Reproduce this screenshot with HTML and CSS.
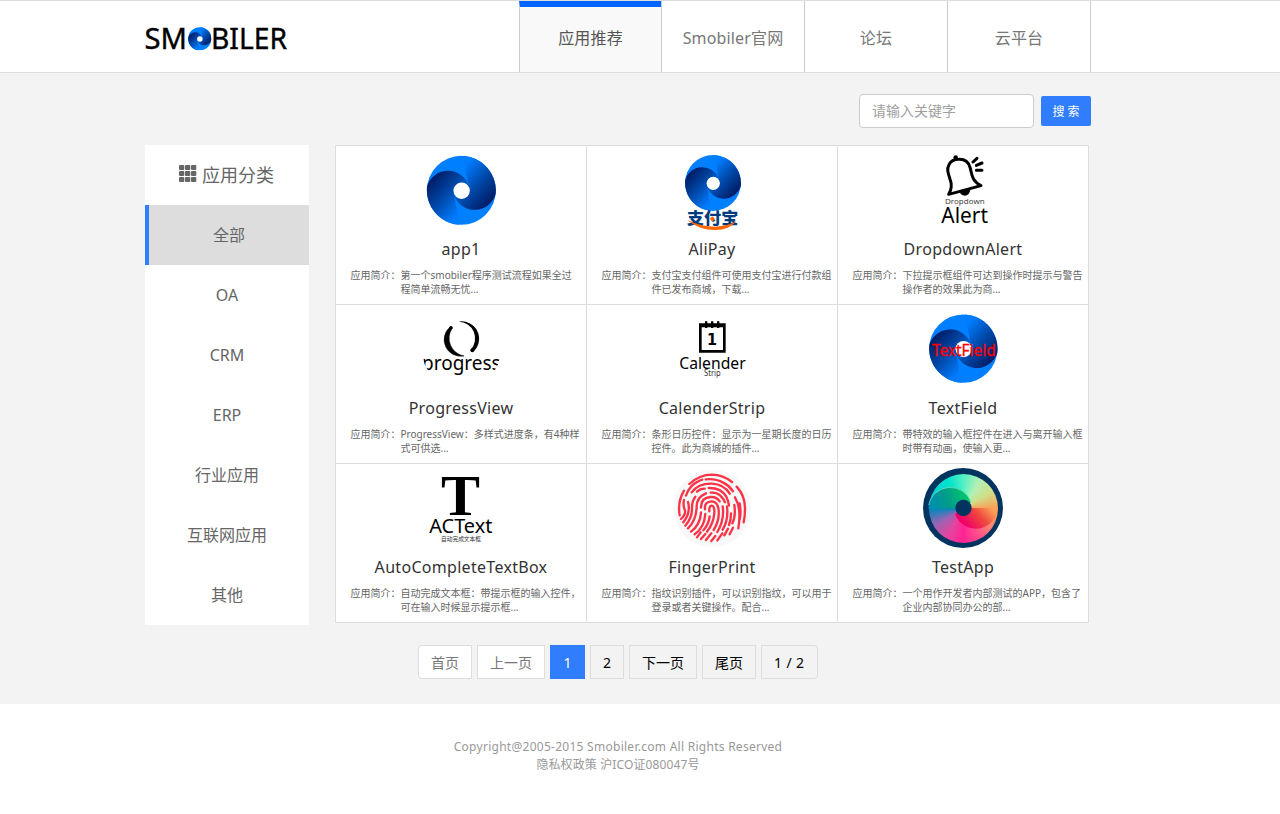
FILE: index.html
```html
<!DOCTYPE html>
<html lang="zh-CN">
<head>
<meta charset="utf-8">
<title>Smobiler</title>
<link rel="stylesheet" href="styles.css">
</head>
<body>
<svg class="defs" width="0" height="0">
  <defs>
    <linearGradient id="lobe" gradientUnits="userSpaceOnUse" x1="-33" y1="-9" x2="0" y2="20">
      <stop offset="0" stop-color="#001a62"/><stop offset=".5" stop-color="#0048a8"/><stop offset="1" stop-color="#007cff"/>
    </linearGradient>
    <symbol id="swirl" viewBox="-35 -35 70 70">
      <circle r="34.5" fill="#007fff"/>
      <path id="half" d="M-34.3-4A22 22 0 0 1 7-6L0 0-7 6-2 34.4A34.5 34.5 0 0 1-34.3-4Z" fill="url(#lobe)"/>
      <use href="#half" transform="rotate(180)"/>
      <circle r="8.2" cx=".3" cy=".4" fill="#fff"/>
    </symbol>
  </defs>
</svg>
<header class="header">
  <div class="container header-row">
    <svg class="logo" width="144" height="30" viewBox="0 0 144 30">
      <text x="-.5" y="25" textLength="42.500" lengthAdjust="spacingAndGlyphs">SM</text>
      <use href="#swirl" x="43" y="3" width="23.500" height="23.500"/>
      <text x="66" y="25" textLength="76" lengthAdjust="spacingAndGlyphs">BILER</text>
    </svg>
    <nav class="nav">
      <a class="nav-item active">应用推荐</a>
      <a class="nav-item">Smobiler官网</a>
      <a class="nav-item">论坛</a>
      <a class="nav-item">云平台</a>
    </nav>
  </div>
</header>
<main class="main">
  <div class="container">
    <form class="search">
      <input class="search-input" placeholder="请输入关键字">
      <button class="search-btn" type="button">搜 索</button>
    </form>
    <div class="content">
      <aside class="side">
        <div class="side-item side-title">
          <svg width="18" height="18" viewBox="0 0 18 18" fill="#666"><rect x="0" y="0" width="5.300" height="5" rx="1"/><rect x="6" y="0" width="5.300" height="5" rx="1"/><rect x="12" y="0" width="5.300" height="5" rx="1"/><rect x="0" y="6" width="5.300" height="5" rx="1"/><rect x="6" y="6" width="5.300" height="5" rx="1"/><rect x="12" y="6" width="5.300" height="5" rx="1"/><rect x="0" y="12" width="5.300" height="5" rx="1"/><rect x="6" y="12" width="5.300" height="5" rx="1"/><rect x="12" y="12" width="5.300" height="5" rx="1"/></svg>
          <span>应用分类</span>
        </div>
        <div class="side-item selected">全部</div>
        <div class="side-item">OA</div>
        <div class="side-item">CRM</div>
        <div class="side-item">ERP</div>
        <div class="side-item">行业应用</div>
        <div class="side-item">互联网应用</div>
        <div class="side-item">其他</div>
      </aside>
      <section class="grid">
        <article class="card">
          <svg class="pic" viewBox="273 30 240 240"><use href="#swirl" x="289" y="46" width="210" height="210"/></svg>
          <h3>app1</h3>
          <p><span>应用简介：</span><span>第一个smobiler程序测试流程如果全过<br>程简单流畅无忧...</span></p>
        </article>
        <article class="card">
          <svg class="pic" viewBox="261 30 240 240">
            <use href="#swirl" x="299" y="44" width="170" height="170"/>
            <text class="zh alipay" x="306" y="253" textLength="154" lengthAdjust="spacingAndGlyphs">支付宝</text>
            <path d="M306 240Q350 260 390 260 430 258 454 243 432 270 392 270 342 270 306 240Z" fill="#f60"/>
            <path d="M382 229l7 8-7 8-7-8Z" fill="#f60"/>
          </svg>
          <h3>AliPay</h3>
          <p><span>应用简介：</span><span>支付宝支付组件可使用支付宝进行付款组<br>件已发布商城，下载...</span></p>
        </article>
        <article class="card">
          <svg class="pic" viewBox="264 30 240 240">
            <g fill="none" stroke="#000" stroke-width="9" stroke-linecap="round" stroke-linejoin="round">
              <path d="M341 163Q354 142 346 120C340 102 334 88 342 74 348 62 360 58 371 58 390 57 401 68 405 82 411 100 408 122 438 137Z"/>
              <path d="M414 66l12-11M424 76l17-7M424 91h17"/>
            </g>
            <circle cx="362" cy="53" r="7"/><path d="M374 157l32-9q-2 19-17 19-10 0-15-10Z"/>
            <text x="330" y="192" font-size="22" fill="#444" textLength="119" lengthAdjust="spacingAndGlyphs">Dropdown</text>
            <text x="319" y="250" font-size="65" textLength="140" lengthAdjust="spacingAndGlyphs">Alert</text>
          </svg>
          <h3>DropdownAlert</h3>
          <p><span>应用简介：</span><span>下拉提示框组件可达到操作时提示与警告<br>操作者的效果此为商...</span></p>
        </article>
        <article class="card">
          <svg class="pic" viewBox="273 27 240 240">
            <defs><clipPath id="round"><circle cx="394" cy="147" r="119"/></clipPath></defs>
            <path d="M361 80A50 50 0 0 0 402 168A54 54 0 0 1 367 84Z" stroke="#000" stroke-width="1.500" stroke-linejoin="round"/>
            <path d="M386 65A52 52 0 0 1 431 154L422 149A50 50 0 0 0 386 65Z"/>
            <circle cx="363" cy="83" r="5"/><circle cx="427" cy="151" r="6"/>
            <text x="276" y="210" font-size="58" textLength="236" lengthAdjust="spacingAndGlyphs" clip-path="url(#round)">progress</text>
          </svg>
          <h3>ProgressView</h3>
          <p><span>应用简介：</span><span>ProgressView：多样式进度条，有4种样<br>式可供选...</span></p>
        </article>
        <article class="card">
          <svg class="pic" viewBox="261 27 240 240">
            <path d="M346 74h72v80h-72Z" fill="none" stroke="#000" stroke-width="8"/>
            <path d="M346 72h72v10h-72ZM360 64h7v20h-7ZM378 64h7v20h-7ZM396 64h7v20h-7Z"/>
            <text x="366" y="135" font-size="50" font-weight="700" textLength="30" lengthAdjust="spacingAndGlyphs" class="one">1</text>
            <text x="283" y="208" font-size="51" textLength="199" lengthAdjust="spacingAndGlyphs">Calender</text>
            <text x="357" y="228" font-size="24" fill="#333" textLength="50" lengthAdjust="spacingAndGlyphs">Strip</text>
          </svg>
          <h3>CalenderStrip</h3>
          <p><span>应用简介：</span><span>条形日历控件：显示为一星期长度的日历<br>控件。此为商城的插件...</span></p>
        </article>
        <article class="card">
          <svg class="pic" viewBox="264 27 240 240"><use href="#swirl" x="281" y="42" width="208" height="208"/>
            <text x="291" y="168" font-size="49" fill="#f00" stroke="#f00" textLength="191" lengthAdjust="spacingAndGlyphs">TextField</text></svg>
          <h3>TextField</h3>
          <p><span>应用简介：</span><span>带特效的输入框控件在进入与离开输入框<br>时带有动画，使输入更...</span></p>
        </article>
        <article class="card">
          <svg class="pic" viewBox="273 24 240 240">
            <text class="serif" x="333" y="164" font-size="172" textLength="117" lengthAdjust="spacingAndGlyphs">T</text>
            <text x="298" y="220" font-size="59" textLength="189" lengthAdjust="spacingAndGlyphs">ACText</text>
            <text class="zh" x="333" y="242" font-size="18" fill="#333" textLength="120" lengthAdjust="spacingAndGlyphs">自动完成文本框</text>
          </svg>
          <h3>AutoCompleteTextBox</h3>
          <p><span>应用简介：</span><span>自动完成文本框：带提示框的输入控件，<br>可在输入时候显示提示框...</span></p>
        </article>
        <article class="card">
          <svg class="pic" viewBox="261 24 240 240">
            <circle cx="382" cy="145" r="116" fill="#f8f8f8"/>
            <g fill="none" stroke="#fb3347" stroke-width="7" stroke-linecap="round">
              <path d="M313 72Q344 44 380 44 415 45 441 66M455 80Q481 108 480 148 480 169 476 187M297 92Q277 125 284 166"/>
              <path d="M303 107Q313 77 338 65 345 61 352 59M362 58Q392 55 415 68 433 77 444 94M450 112Q470 145 460 205M464 130Q469 160 464 178"/>
              <path d="M320 97Q340 70 380 71 418 73 434 101M297 120Q293 137 300 151 302 164 288 177"/>
              <path d="M336 95Q345 86 359 86M371 84Q408 83 424 110 430 122 432 137M309 126Q318 158 295 187M331 110Q320 124 321 145 322 172 301 197"/>
              <path d="M377 98Q396 96 408 109 417 118 420 127M363 100Q333 113 335 143 333 182 309 205"/>
              <path d="M348 143Q347 113 377 111 395 110 404 124M348 157Q346 194 318 215M448 135Q453 170 442 190"/>
              <path d="M360 148Q357 125 380 124 396 125 400 144 406 179 386 210M361 162Q358 203 329 223"/>
              <path d="M373 154Q372 137 380 137 389 138 388 158 386 190 366 215M374 169Q371 193 355 211"/>
              <path d="M413 139Q419 180 397 216M426 139Q431 180 413 209M438 160Q438 179 432 195M347 217L336 232M361 222L348 237M379 220L363 240M391 228L379 243M412 220L397 241M429 206L418 226M444 203L434 223"/>
            </g>
          </svg>
          <h3>FingerPrint</h3>
          <p><span>应用简介：</span><span>指纹识别插件，可以识别指纹，可以用于<br>登录或者关键操作。配合...</span></p>
        </article>
        <article class="card">
          <div class="pic wheel">
            <div class="wheel-disc"></div>
            <svg class="wheel-lobes" width="80" height="80" viewBox="-40 -40 80 80">
              <defs>
                <linearGradient id="green" gradientUnits="userSpaceOnUse" x1="-32" y1="4" x2="5" y2="-12"><stop stop-color="#008cb8"/><stop offset=".45" stop-color="#009a8c"/><stop offset="1" stop-color="#00c76c"/></linearGradient>
                <linearGradient id="red" gradientUnits="userSpaceOnUse" x1="26" y1="-2" x2="4" y2="18"><stop stop-color="#fb9f58"/><stop offset=".45" stop-color="#f0483e"/><stop offset="1" stop-color="#f00068"/></linearGradient>
              </defs>
              <path d="M-34.300-3A22 22 0 0 1 8-6L0 0-34.500 1Z" fill="url(#green)"/>
              <path d="M-34.300-3A22 22 0 0 1 8-6" fill="none" stroke="#7fe8c0" stroke-width=".7"/>
              <path d="M34.300 3A22 22 0 0 1-8 6L0 0 34.500 0Z" fill="url(#red)"/>
              <circle r="8.200" cx=".5" fill="#03335f"/>
            </svg>
          </div>
          <h3>TestApp</h3>
          <p><span>应用简介：</span><span>一个用作开发者内部测试的APP，包含了<br>企业内部协同办公的部...</span></p>
        </article>
      </section>
    </div>
    <div class="pager">
      <a class="page off first">首页</a><a class="page off">上一页</a><a class="page current">1</a><a class="page">2</a><a class="page">下一页</a><a class="page">尾页</a><a class="page last">1 / 2</a>
    </div>
  </div>
</main>
<footer class="footer">
  <div class="copy">Copyright@2005-2015 Smobiler.com All Rights Reserved</div>
  <div>隐私权政策 沪ICO证080047号</div>
</footer>
</body>
</html>
```
FILE: styles.css
```css
* { box-sizing: border-box; }
body { margin: 0; background: #fff; color: #666; font-family: "Noto Sans", "Noto Sans CJK SC", sans-serif; font-size: 14px; overflow: hidden; }
.defs { display: block; }
.container { width: 946px; margin-left: 145px; }
.header { height: 73px; border-top: 1px solid #ddd; border-bottom: 1px solid #ddd; background: #fff; }
.header-row { display: flex; justify-content: space-between; }
.logo { margin-top: 23px; overflow: visible; font-size: 29.5px; fill: #000; stroke: #000; stroke-width: .4px; }
.logo use { stroke: none; }
.nav { display: flex; width: 572px; border-right: 1px solid #ccc; }
.nav-item { width: 143px; height: 71px; border-left: 1px solid #ccc; font-size: 16px; line-height: 75px; letter-spacing: .15px; text-align: center; color: #777; }
.nav-item.active { width: 142px; border-top: 6px solid #06f; line-height: 63px; background: #f9f9f9; color: #555; }
.main { height: 631px; padding-top: 21px; background: #f3f3f3; }
.search { display: flex; justify-content: flex-end; align-items: center; gap: 7px; }
.search-input { width: 175px; height: 34px; padding: 0 12px 2px; border: 1px solid #ccc; border-radius: 4px; background: #fff; font: inherit; }
.search-input::placeholder { color: #a0a0a0; }
.search-btn { width: 50px; height: 30px; padding: 0; border: 0; border-radius: 2px; background: #307dfe; color: #fff; font: 12px "Noto Sans", "Noto Sans CJK SC", sans-serif; }
.content { display: flex; gap: 26px; margin-top: 17px; }
.side { width: 164px; height: 480px; background: #fff; }
.side-item { height: 60px; font-size: 16px; line-height: 60px; text-align: center; }
.side-title { display: flex; justify-content: center; align-items: center; gap: 5px; font-size: 18px; }
.side-title svg { margin: -2px 0 0 -1px; }
.side-item.selected { border-left: 4px solid #307dfe; background: #ddd; }
.grid { display: grid; grid-template-columns: repeat(3, 251px); grid-auto-rows: 159px; width: 754px; height: 478px; border-left: 1px solid #ddd; border-top: 1px solid #ddd; background: #fff; }
.card { padding-top: 4px; border-right: 1px solid #ddd; border-bottom: 1px solid #ddd; white-space: nowrap; }
.pic { display: block; width: 80px; height: 80px; margin: 0 auto; overflow: visible; }
.card h3 { margin: 7px 0 0; font-size: 16px; font-weight: 400; line-height: 24px; letter-spacing: .3px; text-align: center; color: #333; }
.card p { display: flex; margin: 7px 0 0 14.5px; font-size: 10px; line-height: 14px; }
.zh { font-family: "Noto Sans CJK SC", sans-serif; }
.alipay { font-size: 48px; font-weight: 900; fill: #003b7d; }
.one { font-family: "DejaVu Sans", sans-serif; }
.serif { font-family: "Liberation Serif", serif; font-weight: 700; }
.wheel { display: grid; place-items: center; border-radius: 50%; background: #03335f; }
.wheel > * { grid-area: 1 / 1; }
.wheel-disc { width: 69px; height: 69px; border-radius: 50%; background: conic-gradient(#54f0c4, #b4f0b4 30deg, #d0de88 60deg, #fba058 90deg, #ff8a70 120deg, #ff4f8c 150deg, #ff2494 180deg, #e544a0 210deg, #9a64b4 240deg, #0088bc 270deg, #00d2d4 295deg, #00e3cc 330deg, #54f0c4); }
.pager { display: flex; gap: 5px; margin: 20px 0 0 273px; font-size: 14px; color: #000; }
.page { height: 34px; padding: 0 12px; border: 1px solid #ddd; line-height: 34px; white-space: nowrap; }
.page.off { background: #fff; color: #777; }
.page.current { width: 35px; border-color: #307dfe; background: #307dfe; color: #fff; text-align: center; }
.page.first { border-radius: 4px 0 0 4px; }
.page.last { width: 57px; border-radius: 0 4px 4px 0; letter-spacing: .4px; }
.footer { width: 1236px; padding-top: 34px; font-size: 12px; line-height: 18px; letter-spacing: .12px; text-align: center; color: #999; }
.copy { letter-spacing: .27px; }
```
